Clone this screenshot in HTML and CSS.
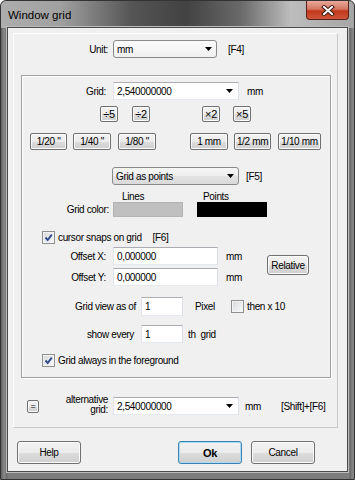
FILE: index.html
```html
<!DOCTYPE html>
<html lang="en">
<head>
    <meta charset="UTF-8">
    <meta name="viewport" content="width=device-width, initial-scale=1.0">
    <title>Window grid</title>
    <link rel="stylesheet" href="styles.css">
</head>
<body>
<div class="window">
    <div class="titlebar">
        <span class="title">Window grid</span>
        <div class="close">
            <svg width="14" height="11" viewBox="0 0 14 11">
                <path d="M3 2 L11 9 M11 2 L3 9" stroke="#3b1a12" stroke-width="4" stroke-linecap="square"/>
                <path d="M3 2 L11 9 M11 2 L3 9" stroke="#ffffff" stroke-width="2" stroke-linecap="square"/>
            </svg>
        </div>
    </div>

    <div class="client">
        <div class="panel">
            <div class="row unit-row">
                <span class="lbl unit-lbl">Unit:</span>
                <div class="dropdown unit-select">mm<svg class="arrow" width="7" height="4"><polygon points="0,0 7,0 3.5,4" fill="#000"/></svg></div>
                <span class="key key-f4">[F4]</span>
            </div>

            <div class="group">
                <div class="row grid-row">
                    <span class="lbl grid-lbl">Grid:</span>
                    <div class="combo grid-combo">2,540000000<svg class="arrow" width="7" height="4"><polygon points="0,0 7,0 3.5,4" fill="#000"/></svg></div>
                    <span class="unit">mm</span>
                </div>

                <div class="row step-row">
                    <button class="btn small s1">÷5</button>
                    <button class="btn small s2">÷2</button>
                    <button class="btn small s3">×2</button>
                    <button class="btn small s4">×5</button>
                </div>

                <div class="row preset-row">
                    <button class="btn preset p1">1/20 "</button>
                    <button class="btn preset p2">1/40 "</button>
                    <button class="btn preset p3">1/80 "</button>
                    <button class="btn preset p4">1 mm</button>
                    <button class="btn preset p5">1/2 mm</button>
                    <button class="btn preset p6">1/10 mm</button>
                </div>

                <div class="row mode-row">
                    <div class="dropdown mode-select">Grid as points<svg class="arrow" width="7" height="4"><polygon points="0,0 7,0 3.5,4" fill="#000"/></svg></div>
                    <span class="key key-f5">[F5]</span>
                </div>

                <div class="row color-row">
                    <span class="lbl color-lbl">Grid color:</span>
                    <div class="swatch-col">
                        <span class="caption lines-cap">Lines</span>
                        <span class="swatch lines"></span>
                    </div>
                    <div class="swatch-col points-col">
                        <span class="caption points-cap">Points</span>
                        <span class="swatch points"></span>
                    </div>
                </div>

                <div class="row check-row snap-row">
                    <span class="check"><svg width="11" height="11"><path d="M2.5 5.5 L4.7 8 L8.8 2.6" fill="none" stroke="#32488f" stroke-width="1.9"/></svg></span>
                    <span class="check-text">cursor snaps on grid</span>
                    <span class="key key-f6">[F6]</span>
                </div>

                <div class="row offset-row">
                    <div class="offset-fields">
                        <div class="row field-row">
                            <span class="lbl grid-lbl">Offset X:</span>
                            <input class="text offset-input" value="0,000000">
                            <span class="unit offset-unit">mm</span>
                        </div>
                        <div class="row field-row second">
                            <span class="lbl grid-lbl">Offset Y:</span>
                            <input class="text offset-input" value="0,000000">
                            <span class="unit offset-unit">mm</span>
                        </div>
                    </div>
                    <button class="btn relative">Relative</button>
                </div>

                <div class="row view-row">
                    <span class="lbl view-lbl">Grid view as of</span>
                    <input class="text num-input" value="1">
                    <span class="after pixel">Pixel</span>
                    <span class="check"></span>
                    <span class="check-text">then x 10</span>
                </div>

                <div class="row every-row">
                    <span class="lbl view-lbl every-lbl">show every</span>
                    <input class="text num-input short" value="1">
                    <span class="after th">th&nbsp; grid</span>
                </div>

                <div class="row check-row fg-row">
                    <span class="check"><svg width="11" height="11"><path d="M2.5 5.5 L4.7 8 L8.8 2.6" fill="none" stroke="#32488f" stroke-width="1.9"/></svg></span>
                    <span class="check-text">Grid always in the foreground</span>
                </div>
            </div>

            <div class="row alt-row">
                <button class="btn eq">=</button>
                <span class="lbl alt-lbl">alternative<br>grid:</span>
                <div class="combo alt-combo">2,540000000<svg class="arrow" width="7" height="4"><polygon points="0,0 7,0 3.5,4" fill="#000"/></svg></div>
                <span class="unit alt-unit">mm</span>
                <span class="key">[Shift]+[F6]</span>
            </div>
        </div>

        <div class="actions">
            <button class="btn action">Help</button>
            <button class="btn action default ok">Ok</button>
            <button class="btn action cancel">Cancel</button>
        </div>
    </div>
</div>
</body>
</html>
```

FILE: styles.css
```css
body {
    margin: 0;
    font-family: "Liberation Sans", Arial, sans-serif;
    font-size: 10px;
    letter-spacing: -0.35px;
    color: #000;
    background: #fff;
}

.window {
    width: 355px;
    height: 480px;
    box-sizing: border-box;
    border: 1px solid #333;
    border-radius: 6px 6px 0 0;
    padding: 0 6px 7px 6px;
    display: flex;
    flex-direction: column;
    background:
        linear-gradient(90deg, #adadad 0, #a0a0a0 60px, #555 130px, #424242 185px, #6a6a6a 240px, #bdbdbd 290px, #a4a4a4 355px) top / 100% 27px no-repeat,
        linear-gradient(90deg, #5e5e5e 0, #8a8a8a 3px, #6a6a6a 6px, #7d7d7d 7px, #7d7d7d 348px, #6a6a6a 349px, #8a8a8a 352px, #5e5e5e 355px);
}

/* title bar */
.titlebar {
    height: 26px;
    display: flex;
    align-items: center;
    justify-content: space-between;
}

.title {
    font-size: 11.5px;
    letter-spacing: 0;
    padding-left: 1px;
    margin-top: 1px;
    color: #000;
}

.close {
    align-self: flex-start;
    width: 43px;
    height: 19px;
    margin-right: -1px;
    box-sizing: border-box;
    border: 1px solid #5a2218;
    border-top: none;
    border-radius: 0 0 4px 4px;
    background: linear-gradient(#e9a99a 0%, #d47762 45%, #c2391c 55%, #d0543a 100%);
    display: flex;
    align-items: center;
    justify-content: center;
}

.client {
    flex: 1;
    background: #f0f0f0;
    border: 1px solid #4a4a4a;
    box-shadow: 0 0 0 1px #bdbdbd;
}

/* generic rows */
.row {
    display: flex;
    align-items: center;
}

.lbl {
    text-align: right;
    flex: none;
}

.key {
    white-space: nowrap;
}

.arrow {
    flex: none;
}

/* outer panel */
.panel {
    margin: 5px 0 0 5px;
    width: 325px;
    box-sizing: border-box;
    border: 1px solid;
    border-color: #fff #c8c8c8 #c8c8c8 #fff;
    padding-bottom: 12px;
}

.unit-row {
    margin-top: 6px;
}

.unit-lbl {
    width: 94px;
    margin-right: 5px;
}

.dropdown {
    height: 18px;
    box-sizing: border-box;
    border: 1px solid #8a8a8a;
    border-radius: 3px;
    background: linear-gradient(#f6f6f6 0%, #eeeeee 50%, #e3e3e3 51%, #dadada 100%);
    display: flex;
    align-items: center;
    justify-content: space-between;
    padding: 0 4px 0 3px;
}

.unit-select {
    width: 104px;
    background: linear-gradient(#fbfbfb, #f0f0f0);
}

.key-f4 {
    margin-left: 11px;
}

.combo {
    height: 18px;
    box-sizing: border-box;
    border: 1px solid;
    border-color: #abadb3 #dbdfe6 #e3e9ef #e2e3ea;
    background: #fff;
    display: flex;
    align-items: center;
    justify-content: space-between;
    padding: 0 5px 0 3px;
}

/* inner group */
.group {
    margin: 17px 0 0 7px;
    width: 310px;
    box-sizing: border-box;
    border: 1px solid #a0a0a0;
    box-shadow: inset 1px 1px 0 #fff, 1px 1px 0 #fff;
    padding-bottom: 10px;
}

.grid-row {
    margin-top: 6px;
}

.grid-lbl {
    width: 84px;
    margin-right: 7px;
}

.grid-combo {
    width: 126px;
}

.unit {
    margin-left: 8px;
}

.btn {
    font: inherit;
    letter-spacing: inherit;
    color: #000;
    padding: 0;
    box-sizing: border-box;
    border: 1px solid #707070;
    border-radius: 3px;
    background: linear-gradient(#f2f2f2 0%, #ebebeb 50%, #dddddd 51%, #cfcfcf 100%);
    box-shadow: inset 0 0 0 1px #fbfbfb;
    white-space: nowrap;
    flex: none;
}

.step-row {
    margin-top: 6px;
}

.small {
    width: 18px;
    height: 16px;
    border-radius: 2px;
    font-size: 11px;
    line-height: 13px;
}

.s1 { margin-left: 78px; }
.s2 { margin-left: 14px; }
.s3 { margin-left: 52px; }
.s4 { margin-left: 13px; }

.preset-row {
    margin-top: 11px;
}

.preset {
    height: 17px;
    width: 38px;
    border-radius: 2px;
}

.p1 { margin-left: 8px; width: 37px; }
.p2 { margin-left: 6px; }
.p3 { margin-left: 7px; }
.p4 { margin-left: 34px; }
.p5 { margin-left: 6px; width: 37px; }
.p6 { margin-left: 7px; width: 43px; }

.mode-row {
    margin-top: 17px;
}

.mode-select {
    margin-left: 90px;
    width: 127px;
}

.key-f5 {
    margin-left: 7px;
}

.color-row {
    margin-top: 7px;
    align-items: flex-end;
}

.color-lbl {
    width: 87px;
    margin-right: 4px;
    line-height: 15px;
}

.swatch-col {
    display: flex;
    flex-direction: column;
}

.points-col {
    margin-left: 14px;
}

.caption {
    line-height: 10px;
}

.lines-cap { padding-left: 9px; }
.points-cap { padding-left: 6px; }

.swatch {
    width: 70px;
    height: 15px;
    box-sizing: border-box;
}

.swatch.lines {
    background: #c0c0c0;
    border: 1px solid #b4b4b4;
}

.swatch.points {
    background: #000;
}

.check-row {
    padding-left: 20px;
}

.snap-row {
    margin-top: 14px;
}

.check {
    width: 13px;
    height: 13px;
    box-sizing: border-box;
    border: 1px solid #8e8f8f;
    background: linear-gradient(135deg, #d6d8db, #fbfbfb);
    box-shadow: inset 0 0 0 1px #f4f4f4;
    flex: none;
}

.check svg {
    display: block;
}

.check-text {
    margin-left: 3px;
}

.key-f6 {
    margin-left: 11px;
}

.offset-row {
    margin-top: 3px;
}

.field-row.second {
    margin-top: 3px;
}

.text {
    font: inherit;
    letter-spacing: inherit;
    color: #000;
    height: 18px;
    box-sizing: border-box;
    border: 1px solid;
    border-color: #abadb3 #dbdfe6 #e3e9ef #e2e3ea;
    background: #fff;
    padding: 0 3px;
    margin: 0;
    outline: none;
}

.offset-input {
    width: 105px;
}

.offset-unit {
    width: 41px;
}

.relative {
    width: 42px;
    height: 20px;
    margin-bottom: 3px;
}

.view-row {
    margin-top: 11px;
}

.view-lbl {
    width: 114px;
    margin-right: 5px;
}

.every-lbl {
    width: 112px;
    margin-right: 7px;
}

.num-input {
    width: 42px;
    height: 19px;
}

.num-input.short {
    height: 18px;
}

.after.pixel {
    margin-left: 12px;
    width: 36px;
}

.after.th {
    margin-left: 5px;
}

.every-row {
    margin-top: 9px;
}

.fg-row {
    margin-top: 11px;
}

/* alternative grid */
.alt-row {
    margin-top: 19px;
    padding-left: 13px;
}

.eq {
    width: 12px;
    height: 13px;
    border-radius: 2px;
    font-size: 9px;
    line-height: 9px;
}

.alt-lbl {
    width: 69px;
    margin-right: 5px;
    line-height: 10px;
    margin-top: -2px;
}

.alt-combo {
    width: 126px;
}

.alt-unit {
    margin-left: 6px;
    width: 36px;
}

/* dialog buttons */
.actions {
    display: flex;
    margin: 13px 0 0 9px;
}

.action {
    width: 64px;
    height: 23px;
}

.ok {
    margin-left: 97px;
    font-weight: bold;
    font-size: 11px;
    border-color: #3c7fb1;
    box-shadow: inset 0 0 0 1px #a9dcf6;
}

.cancel {
    margin-left: 9px;
}
```
